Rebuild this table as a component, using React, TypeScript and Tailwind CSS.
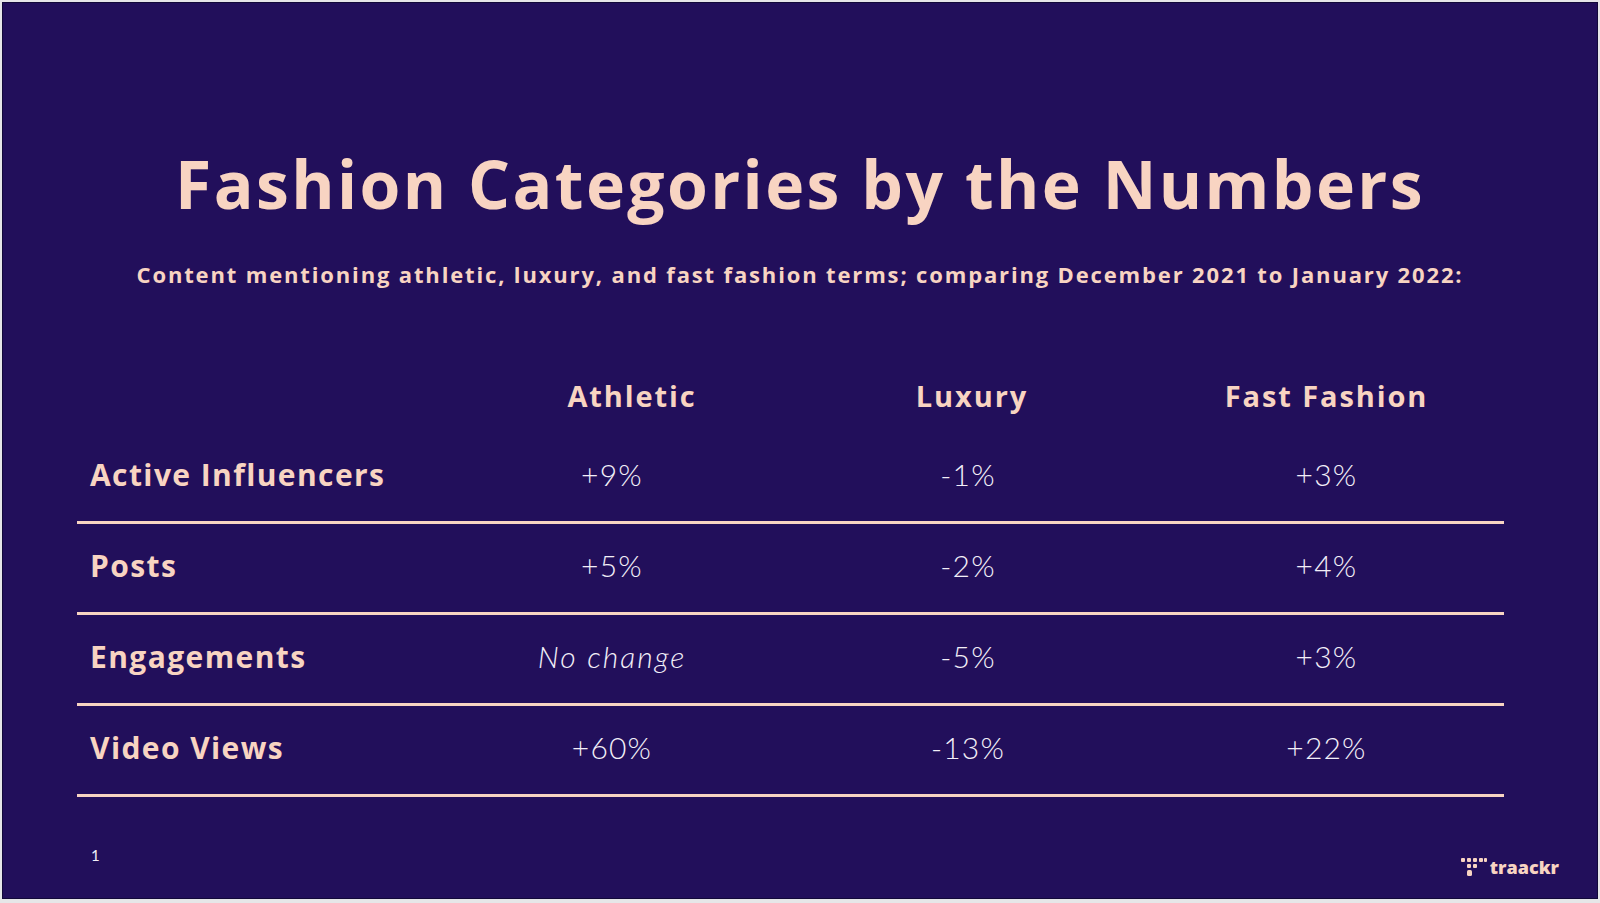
import React from "react"

const rows = [
  { label: "Active Influencers", values: ["+9%", "-1%", "+3%"] },
  { label: "Posts", values: ["+5%", "-2%", "+4%"] },
  { label: "Engagements", values: ["No change", "-5%", "+3%"] },
  { label: "Video Views", values: ["+60%", "-13%", "+22%"] },
]

const cols = "grid grid-cols-[360px_350px_362px_355px]"
const head = { fontFamily: "'Open Sans', 'DejaVu Sans', sans-serif" }
const body = { fontFamily: "Lato, 'Noto Sans', sans-serif" }

function Logo() {
  return (
    <div className="flex items-center gap-[2px]">
      <svg width="28" height="22" viewBox="0 0 28 22" fill="#f8d4c2">
        <rect x="1" y="2" width="4" height="4" rx="1" />
        <rect x="7" y="2" width="4" height="4" rx="1" />
        <rect x="13" y="2" width="4" height="4" rx="1" />
        <rect x="19" y="2" width="4" height="4" rx="1" />
        <rect x="24" y="2" width="3" height="4" rx="1" />
        <rect x="7" y="8" width="4" height="4" rx="1" />
        <rect x="13" y="8" width="4" height="4" rx="1" />
        <rect x="7" y="14" width="5" height="6" rx="1.5" />
      </svg>
      <span className="text-[18px] font-extrabold leading-none text-[#f8d4c2]" style={head}>
        traackr
      </span>
    </div>
  )
}

export default function App() {
  return (
    <div className="min-h-[903px] w-[1600px] bg-[#e6e6e8] pt-[2px] pl-[2px]">
      <div className="flex h-[897px] w-[1596px] flex-col border border-[#120939] bg-[#220f5b]">
        <h1
          className="pt-[140px] text-center text-[66px] font-bold leading-[80px] tracking-[2.4px] text-[#f8d4c2]"
          style={head}
        >
          Fashion Categories by the Numbers
        </h1>
        <p
          className="mt-[36px] text-center text-[22px] font-bold leading-[30px] tracking-[1.85px] text-[#f8d4c2]"
          style={head}
        >
          Content mentioning athletic, luxury, and fast fashion terms; comparing December 2021 to January 2022:
        </p>

        <div className="ml-[74px] mt-[79px] w-[1427px]">
          <div
            className={`${cols} h-[56px] items-center text-[29px] font-bold tracking-[1.9px] text-[#f8d4c2]`}
            style={head}
          >
            <div />
            <div className="pl-[40px] text-center">Athletic</div>
            <div className="pl-[8px] text-center">Luxury</div>
            <div className="text-center">Fast Fashion</div>
          </div>
          <div className="mt-[9px]">
            {rows.map((r) => (
              <div key={r.label} className={`${cols} h-[91px] items-center border-b-[3px] border-[#f8d4c2] pb-[6px]`}>
                <div className="pl-[13px] text-[30px] font-bold tracking-[1.4px] text-[#f8d4c2]" style={head}>
                  {r.label}
                </div>
                {r.values.map((v, i) => (
                  <div
                    key={i}
                    className={`text-center text-[30px] font-light text-[#f3eff8] ${
                      v === "No change" ? "italic tracking-[2px]" : "tracking-[1.2px]"
                    }`}
                    style={body}
                  >
                    {v}
                  </div>
                ))}
              </div>
            ))}
          </div>
        </div>

        <div className="flex justify-between pl-[88px] pr-[38px]">
          <span className="mt-[48px] text-[15px] leading-[20px] text-[#f3eff8]" style={body}>
            1
          </span>
          <div className="mt-[59px]">
            <Logo />
          </div>
        </div>
      </div>
    </div>
  )
}
